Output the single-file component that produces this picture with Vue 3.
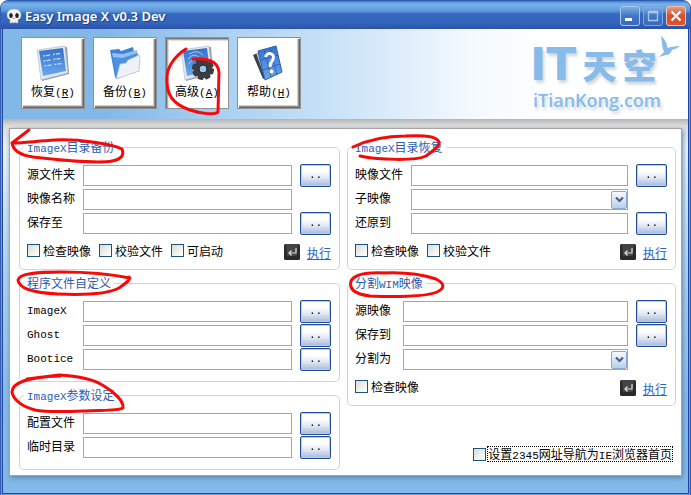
<script setup>
const tools = [
  { id: 'restore', text: '恢复', key: 'R' },
  { id: 'backup', text: '备份', key: 'B' },
  { id: 'advanced', text: '高级', key: 'A', active: true },
  { id: 'help', text: '帮助', key: 'H' },
]
const columns = [
  [
    {
      id: 'bk', title: ['ImageX', '目录备份'],
      rows: [
        { label: '源文件夹', browse: true },
        { label: '映像名称' },
        { label: '保存至', browse: true },
      ],
      checks: ['检查映像', '校验文件', '可启动'],
    },
    {
      id: 'pf', title: ['', '程序文件自定义'],
      rows: [
        { label: 'ImageX', latin: true, browse: true },
        { label: 'Ghost', latin: true, browse: true },
        { label: 'Bootice', latin: true, browse: true },
      ],
    },
    {
      id: 'pa', title: ['ImageX', '参数设定'],
      rows: [
        { label: '配置文件', browse: true },
        { label: '临时目录', browse: true },
      ],
    },
  ],
  [
    {
      id: 'rs', title: ['ImageX', '目录恢复'],
      rows: [
        { label: '映像文件', browse: true },
        { label: '子映像', select: true },
        { label: '还原到', browse: true },
      ],
      checks: ['检查映像', '校验文件'],
    },
    {
      id: 'sp', title: ['', '分割', 'WIM', '映像'], narrow: true,
      rows: [
        { label: '源映像', browse: true },
        { label: '保存到', browse: true },
        { label: '分割为', select: true },
      ],
      checks: ['检查映像'],
    },
  ],
]
</script>

<template>
  <div class="window">
    <header class="titlebar">
      <svg class="skull" width="16" height="16" viewBox="0 0 16 16" aria-hidden="true">
        <path d="M8 1C3 1 1 4 1 7c0 2.500 1 4 3 4.600V15h2l.5-1 .8 1h1.400l.8-1 .5 1h2v-3.400c2-.6 3-2.100 3-4.600 0-3-2-6-7-6z" fill="#f4f4f0" stroke="#aab" stroke-width=".5" />
        <ellipse cx="5" cy="7.500" rx="1.800" ry="2.500" fill="#222" />
        <ellipse cx="11" cy="7.500" rx="1.800" ry="2.500" fill="#222" />
        <path d="M8 9.500l-.7 1.500h1.400z" fill="#444" />
      </svg>
      <h1>Easy Image X v0.3 Dev</h1>
      <div class="winbtns">
        <button type="button" class="wb" aria-label="Minimize">
          <svg width="18" height="18" viewBox="0 0 18 18"><path d="M4 11h7v3H4z" fill="#fff" /></svg>
        </button>
        <button type="button" class="wb dim" aria-label="Maximize">
          <svg width="18" height="18" viewBox="0 0 18 18"><path d="M4.500 4.500h9v9h-9zM4.500 5.500h9" fill="none" stroke="#a9c9f3" stroke-width="1.300" /></svg>
        </button>
        <button type="button" class="wb close" aria-label="Close">
          <svg width="18" height="18" viewBox="0 0 18 18"><path d="M4.500 4.500l9 9M13.500 4.500l-9 9" stroke="#fff" stroke-width="2.300" /></svg>
        </button>
      </div>
    </header>

    <div class="client">
      <div class="banner">
        <nav class="tools">
          <button v-for="t in tools" :key="t.id" type="button" class="tool" :class="{ active: t.active }">
            <svg width="34" height="36" viewBox="0 0 34 36" aria-hidden="true">
              <defs>
                <linearGradient :id="'g' + t.id" x1="0" y1="0" x2="0" y2="1">
                  <stop offset="0" stop-color="#3470c8" />
                  <stop offset="1" stop-color="#6ba8ee" />
                </linearGradient>
              </defs>
              <template v-if="t.id === 'restore' || t.id === 'advanced'">
                <path d="M2 5l4 31 27-7-2-27z" fill="#8d9aa8" />
                <path d="M1 5l4 30 27-7L29 1z" fill="#e3e8ee" stroke="#aab4bf" stroke-width=".6" />
                <path d="M3 6l4 25 23-5L27 3z" :fill="'url(#g' + t.id + ')'" />
                <path v-if="t.id === 'restore'" d="M7 11l7-1M7.500 16l7-1M8.500 21l7-1M17 9.500l7-1M17.500 14.500l7-1M18.500 19.500l7-1" stroke="#b9d8fb" stroke-width="1.300" stroke-dasharray="2 1 5" />
                <template v-else>
                  <path d="M9 9q9-5 14 1M8 14q7-8 12 0M9 19q3-7 8-5" fill="none" stroke="#a9cdf7" stroke-width="1" />
                  <g transform="translate(23 24)">
                    <g fill="#3b3d40">
                      <rect v-for="n in 4" :key="n" x="-3" y="-11" width="6" height="22" rx="1.500" :transform="'rotate(' + (n * 45 + 15) + ')'" />
                      <circle r="9" />
                    </g>
                    <circle r="4" fill="#9fc4ee" stroke="#202225" />
                  </g>
                </template>
              </template>
              <template v-else-if="t.id === 'backup'">
                <path d="M2 5l9-1 2 2 12-4 2 10L9 34 7 32z" fill="#3f82d3" />
                <path d="M4 8l11 1 14-4v7L9 30z" fill="#8fc1f5" />
                <path d="M5 12l9 1 16-5-1 8-21 16z" fill="#4f91df" />
                <path d="M8 34l4-15 6-1 2-3 11-5 1 2-1 14z" fill="#edf2f9" stroke="#a5b3c6" stroke-width=".7" />
              </template>
              <template v-else>
                <path d="M1 10l10-4 10 23-10 5z" fill="#3b424c" />
                <path d="M4 8l8-2 8 25-7 2z" fill="#b5bcc7" />
                <path d="M6 6l18-5 6 26-17 8z" :fill="'url(#g' + t.id + ')'" stroke="#2a60b4" />
                <path d="M8 15l18-5M11 25l17-6M12 4l7 28M18 3l7 27" stroke="#2a60b4" stroke-width=".9" />
                <path d="M13.500 12q2-5 6-3t0 8q-2 2-1 5" fill="none" stroke="#fff" stroke-width="3" />
                <circle cx="19.500" cy="26.500" r="2" fill="#fff" />
              </template>
            </svg>
            <span>{{ t.text }}<i>(<u>{{ t.key }}</u>)</i></span>
          </button>
        </nav>
        <div class="logo">
          <div class="brand"><b>IT</b><strong>天</strong><strong>空</strong></div>
          <div class="site">iTianKong.com</div>
          <svg class="bird" width="22" height="24" viewBox="0 0 22 24" aria-hidden="true">
            <path d="M2 0c4 3 6 7 6.500 12 3-1 7-2 12.500-2-3 2-4 3-8 4-1 3-3 5-6 5L0 21l5-5C3 12 3 6 2 0z" fill="#86bbea" />
          </svg>
        </div>
      </div>

      <main class="panel">
        <div v-for="(groups, c) in columns" :key="c" class="column">
          <fieldset v-for="g in groups" :key="g.id" :class="{ narrow: g.narrow, plain: !g.checks }">
            <legend><template v-for="(p, n) in g.title" :key="n"><span v-if="n % 2 === 0 && p" class="latin">{{ p }}</span><template v-else>{{ p }}</template></template></legend>
            <div class="rows">
              <div v-for="(r, n) in g.rows" :key="n" class="row">
                <label :for="g.id + n" :class="{ latin: r.latin }">{{ r.label }}</label>
                <div v-if="r.select" class="combo">
                  <select :id="g.id + n"></select>
                  <span class="arrow">
                    <svg width="9" height="7" viewBox="0 0 9 7"><path d="M1 1.500l3.500 3.500L8 1.500" fill="none" stroke="#4d6185" stroke-width="2.200" /></svg>
                  </span>
                </div>
                <input v-else :id="g.id + n" type="text" />
                <button v-if="r.browse" type="button" class="browse">..</button>
              </div>
            </div>
            <div v-if="g.checks" class="actions">
              <label v-for="k in g.checks" :key="k"><input type="checkbox" />{{ k }}</label>
              <svg class="enter" width="16" height="16" viewBox="0 0 16 16" aria-hidden="true">
                <rect width="16" height="16" rx="1.500" fill="#292929" />
                <path d="M2 0h12l-1 12H3z" fill="#444" />
                <path d="M12 4v5H5M7.500 6.500L5 9l2.500 2.500" fill="none" stroke="#ddd" stroke-width="1.200" />
              </svg>
              <a href="#">执行</a>
            </div>
          </fieldset>
          <label v-if="c === 1" class="home"><input type="checkbox" /><span class="focus">设置<span class="latin">2345</span>网址导航为<span class="latin">IE</span>浏览器首页</span></label>
        </div>
      </main>
    </div>

    <svg class="marks" width="691" height="495" viewBox="0 0 691 495" aria-hidden="true">
      <g fill="none" stroke="#f90808" stroke-width="3" stroke-linecap="round" stroke-linejoin="round">
        <path d="M186 49C173 57 167 69 167 77C166 94 172 104 190 110C202 114 215 115 218 112L219 72C218 63 210 58 193 59" />
        <path d="M29 130L12 143C13 150 20 155 33 157C60 160 96 164 112 161C123 159 124 154 122 149C112 144 80 139 55 140C38 141 22 143 13 143" />
        <path d="M353 147C370 139 389 136 405 136C425 135 437 136 439 142C440 147 432 151 426 156C416 161 379 160 360 156" />
        <path d="M130 278C115 275 88 272 62 272C38 272 19 273 18 280C19 289 35 293 58 294C82 295 108 294 119 288C125 284 131 280 129 277" />
        <path d="M27 379L59 375C80 376 93 379 104 386C114 392 124 401 123 408C118 411 102 410 83 411C61 412 45 412 35 410C23 407 13 400 12 392C12 384 25 377 60 376" />
        <path d="M387 273C370 272 355 273 351 281C349 289 354 294 370 296C391 297 426 297 437 292C445 288 445 284 436 279C421 274 400 272 382 273" />
      </g>
    </svg>
  </div>
</template>

<style>
body {
  margin: 0;
  background: #fff;
}
</style>

<style scoped>
* {
  box-sizing: border-box;
}
.window {
  position: relative;
  display: flex;
  flex-direction: column;
  min-height: 100vh;
  overflow: hidden;
  background: #6c9ce2;
  border: 1px solid #2f5cb0;
  border-radius: 8px 8px 0 0;
  font-family: "Noto Sans CJK SC", sans-serif;
  font-size: 12px;
  line-height: 15px;
  color: #000;
}
button, input, select {
  font: inherit;
  color: inherit;
  margin: 0;
  padding: 0;
}
.titlebar {
  display: flex;
  align-items: center;
  height: 28px;
  padding: 2px 4px 0 5px;
  background: linear-gradient(#3f7fd0, #7ab4e9 3px, #5b97dc 10px, #3567bd 13px, #3265bb 22px, #2d52a7);
}
.titlebar h1 {
  flex: 1;
  margin: 0 0 0 3px;
  font: 600 13px/20px "Noto Sans", sans-serif;
  color: #fff;
  text-shadow: 1px 1px 1px #1b3c80;
}
.winbtns {
  display: flex;
  gap: 3px;
}
.wb {
  width: 20px;
  height: 20px;
  border: 1px solid #a8c8ee;
  border-radius: 3px;
  background: linear-gradient(#7faee2, #4076c5 50%, #3769bb);
}
.wb svg {
  display: block;
}
.wb.dim {
  border-color: #7ba8e4;
}
.wb.close {
  border-color: #f0c3b8;
  background: linear-gradient(#e79a83, #d8502d 50%, #d9552f);
}
.client {
  flex: 1;
  display: flex;
  flex-direction: column;
  margin: 0 1px 1px;
  border: solid #2145a0;
  border-width: 0 1px 1px;
  background: linear-gradient(#b4b4b4 90px, #dedede 97px, #eef4fa 118px, #b5d5f2 230px, #86bbea 370px, #83b9e8);
}
.banner {
  display: flex;
  justify-content: space-between;
  height: 90px;
  padding: 8px 6px 0 18px;
  background: linear-gradient(90deg, #82b8e8 15%, #a8cff1 31%, #c3dff6 45%, #d8eafa 55%, #f3f9fe 68%, #fff 80%);
}
.tools {
  display: flex;
  gap: 8px;
}
.tool {
  display: flex;
  flex-direction: column;
  align-items: center;
  gap: 2px;
  width: 64px;
  height: 72px;
  padding-top: 7px;
  background: #fff;
  border: 1px solid #929292;
  box-shadow: inset 1px 1px #fff, inset -1px -1px #666, inset -2px -2px #929292, inset -3px -3px #cbcbcb;
}
.tool.active {
  box-shadow: inset 1px 1px #777, inset 2px 2px #adadad, inset 3px 3px #e0e0e0;
}
.tool i, .latin {
  font-family: "Liberation Mono", monospace;
  font-size: 11px;
  font-style: normal;
}
.logo {
  position: relative;
  width: 152px;
  padding-top: 6px;
  color: #86bbea;
  text-shadow: 2px 3px 3px #d4d8dc;
}
.brand {
  display: flex;
  align-items: center;
  gap: 6px;
  height: 44px;
}
.brand b {
  font: bold 44px/44px "DejaVu Sans", sans-serif;
}
.brand strong {
  font-weight: 900;
  font-size: 34px;
  line-height: 34px;
}
.site {
  font: 600 18px/24px "Open Sans", sans-serif;
  padding: 1px 0 0 3px;
}
.bird {
  position: absolute;
  top: -1px;
  right: 1px;
}
.panel {
  flex: 1;
  display: grid;
  grid-template-columns: 321fr 329fr;
  gap: 7px;
  margin: 9px 6px 17px;
  padding: 11px 5px 5px 9px;
  background: #fff;
  border: 1px solid #a5a5a5;
  box-shadow: 1px 2px 5px #5d86ab;
}
.column {
  display: flex;
  flex-direction: column;
  gap: 6px;
  min-width: 0;
}
fieldset {
  min-width: 0;
  margin: 0;
  padding: 9px 8px 0 7px;
  border: 1px solid #d3d3d3;
  border-radius: 5px;
}
fieldset.plain {
  padding-bottom: 10px;
}
legend {
  margin-left: -3px;
  padding: 0 3px;
  height: 15px;
  line-height: 14px;
  color: #2b5bb2;
  white-space: nowrap;
}
.rows {
  display: grid;
  gap: 1px;
}
.row {
  display: grid;
  grid-template-columns: 56px 1fr 39px;
  align-items: center;
  height: 23px;
}
.narrow .row {
  grid-template-columns: 48px 1fr 39px;
}
.row label {
  padding-bottom: 4px;
}
.row label.latin {
  padding-bottom: 1px;
}
.row input, .combo select {
  width: 100%;
  height: 21px;
  border: 1px solid #a5a5a5;
  border-radius: 0;
  background: #fff;
}
.combo {
  display: grid;
}
.combo select {
  grid-area: 1 / 1;
  appearance: none;
}
.combo .arrow {
  grid-area: 1 / 1;
  justify-self: end;
  align-self: center;
  display: grid;
  place-items: center;
  width: 16px;
  height: 18px;
  margin-right: 1px;
  border: 1px solid #8ba8d0;
  border-radius: 2px;
  background: linear-gradient(#f6faff, #b9cfee);
  pointer-events: none;
}
.browse {
  justify-self: end;
  width: 31px;
  height: 23px;
  border: 1px solid #234b93;
  border-radius: 2px;
  background: linear-gradient(#fff 30%, #e2eaf5 60%, #a5b8da);
  box-shadow: inset 0 0 0 1px #b9cdea;
  font-family: "Liberation Mono", monospace;
  font-size: 11px;
}
.actions {
  display: flex;
  align-items: center;
  height: 34px;
}
.actions label {
  display: flex;
  align-items: center;
  gap: 3px;
  margin-right: 8px;
  padding-bottom: 3px;
}
input[type="checkbox"] {
  appearance: none;
  flex: none;
  width: 13px;
  height: 13px;
  border: 1px solid #1d5281;
  background: linear-gradient(135deg, #dcdcd7, #fff);
}
.enter {
  margin-left: auto;
}
.actions a {
  margin-left: 7px;
  color: #2b62c4;
  text-decoration: underline;
}
.home {
  display: flex;
  align-items: center;
  justify-content: flex-end;
  gap: 2px;
  margin: auto 4px 9px 0;
}
.focus {
  height: 14px;
  line-height: 13px;
  outline: 1px dotted #000;
  white-space: nowrap;
}
.marks {
  position: absolute;
  top: -1px;
  left: -1px;
  pointer-events: none;
}
</style>
